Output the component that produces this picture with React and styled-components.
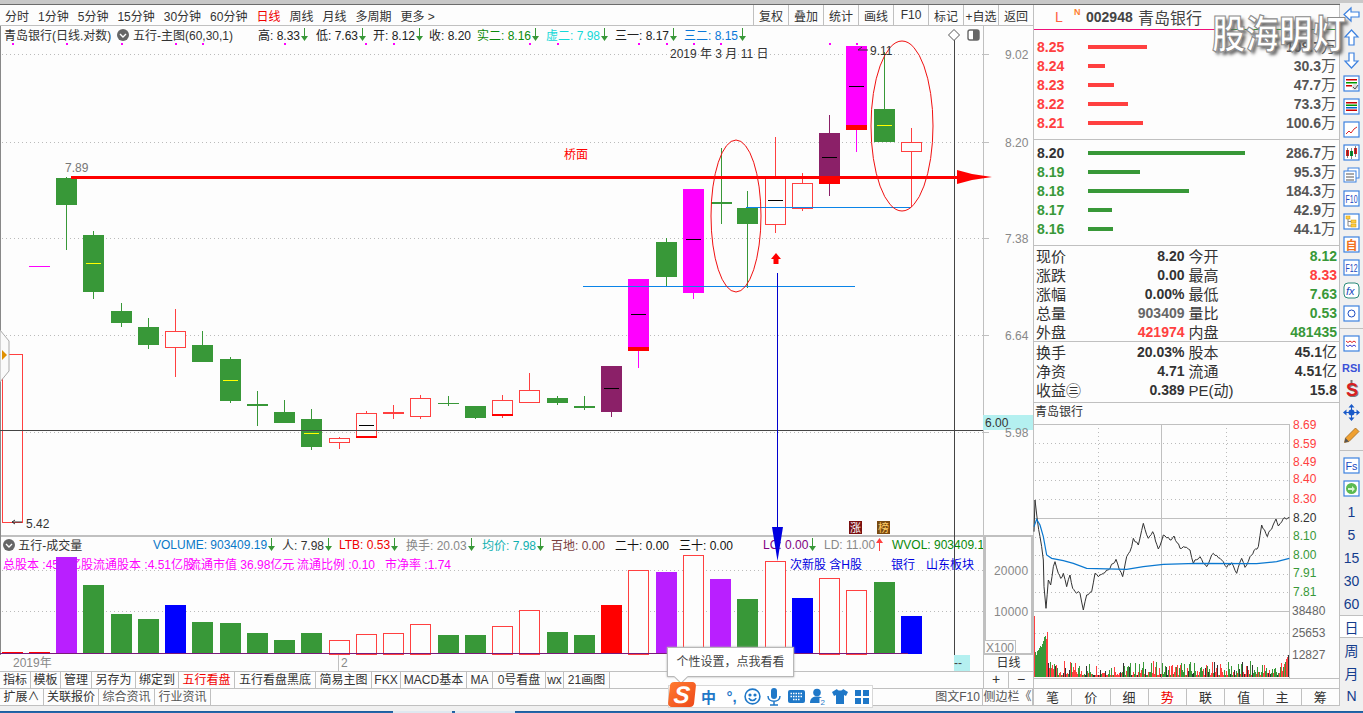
import React from "react";
import styled, { createGlobalStyle } from "styled-components";

const GREEN = "#389838";
const RED = "#ff4040";
const BG = "#fdfdfd";
const LINE = "#c0c0c0";
const FONT = `"Liberation Sans", "Noto Sans CJK SC", sans-serif`;

const Global = createGlobalStyle`
  html, body { margin: 0; padding: 0; background: #f0f0f0; }
  body { font-family: ${FONT}; font-size: 12px; color: #333; }
`;

const Page = styled.div`
  position: relative;
  width: 1363px;
  height: 713px;
  overflow: hidden;
  display: flex;
  flex-direction: column;
  background: #f0f0f0;
`;
const TopStrip = styled.div`
  height: 4px;
  flex: none;
  background: #c8c8c8;
  border-bottom: 1px solid #6c6c6c;
`;
const Body = styled.div`
  display: flex;
  height: 705px;
  flex: none;
  align-items: flex-start;
`;
const Main = styled.div`
  width: 1033px;
  display: flex;
  flex-direction: column;
  background: ${BG};
`;
const Toolbar = styled.div`
  height: 20px;
  flex: none;
  display: flex;
  justify-content: space-between;
  align-items: stretch;
  border-bottom: 1px solid ${LINE};
  background: ${BG};
`;
const Periods = styled.div`
  display: flex;
  gap: 9px;
  align-items: center;
  padding-left: 5px;
`;
const Period = styled.span`
  color: ${(p) => (p.$active ? "#f00000" : "#333")};
  white-space: nowrap;
`;
const Buttons = styled.div`
  display: flex;
`;
const ToolButton = styled.div`
  width: 35px;
  box-sizing: border-box;
  border-left: 1px solid ${LINE};
  display: flex;
  align-items: center;
  justify-content: center;
  color: #333;
  white-space: nowrap;
`;
const ChartPanel = styled.div`
  position: relative;
  z-index: 2;
  height: 509px;
  flex: none;
`;
const ChartSvg = styled.svg`
  position: absolute;
  inset: 0;
  overflow: visible;
  font-family: ${FONT};
`;
const ChartText = styled.text`
  font-size: 12px;
  letter-spacing: ${(p) => (p.$wide ? "0.2px" : "0")};
`;
const BadgeText = styled.text`
  font-size: 11px;
`;
const IconLabel = styled.text`
  font-family: ${FONT};
`;
const ArrowSvg = styled.svg`
  margin-left: 1px;
  flex: none;
`;
const Legend = styled.div`
  position: relative;
  display: flex;
  align-items: center;
  height: ${(p) => p.$h}px;
  padding-left: ${(p) => p.$pad ?? 4}px;
  width: 983px;
  box-sizing: border-box;
  overflow: hidden;
`;
const LegendItem = styled.span`
  width: ${(p) => p.$w}px;
  flex: none;
  display: inline-flex;
  align-items: center;
  white-space: nowrap;
  color: ${(p) => p.$c || "#333"};
`;
const VolumePanel = styled.div`
  position: relative;
  height: 120px;
  flex: none;
  box-sizing: border-box;
  border-top: 2px solid ${LINE};
`;
const InfoRow = styled.div`
  display: flex;
  height: 16px;
  margin-top: 3px;
  padding-left: 3px;
  align-items: center;
`;
const InfoItem = styled.span`
  width: ${(p) => p.$w}px;
  flex: none;
  white-space: nowrap;
  color: ${(p) => p.$c};
`;
const BarsSvg = styled.svg`
  position: absolute;
  left: 0;
  top: -2px;
  font-family: ${FONT};
`;
const DateRow = styled.div`
  display: flex;
  height: 17px;
  flex: none;
  border-bottom: 1px solid ${LINE};
  box-sizing: border-box;
`;
const DateCell = styled.div`
  width: ${(p) => p.$w}px;
  flex: none;
  box-sizing: border-box;
  padding-left: ${(p) => p.$pad || 0}px;
  color: ${(p) => p.$c || "#333"};
  background: ${(p) => p.$bg || "transparent"};
  border-left: ${(p) => (p.$edge ? `1px solid ${LINE}` : "none")};
  text-align: ${(p) => (p.$center ? "center" : "left")};
  line-height: 16px;
`;
const TabRow = styled.div`
  display: flex;
  height: 17px;
  flex: none;
  box-sizing: border-box;
  border-bottom: 1px solid ${LINE};
`;
const TabGroup = styled.div`
  display: flex;
  width: ${(p) => p.$w}px;
  flex: none;
`;
const Tab = styled.div`
  width: ${(p) => p.$w}px;
  flex: none;
  box-sizing: border-box;
  border-right: 1px solid ${LINE};
  text-align: center;
  line-height: 16px;
  white-space: nowrap;
  color: ${(p) => (p.$active ? "#f00000" : p.$dim ? "#555" : "#333")};
`;
const MiniButton = styled.div`
  width: 25px;
  flex: none;
  box-sizing: border-box;
  border-left: 1px solid ${LINE};
  text-align: center;
  font-size: 14px;
  color: #333;
  line-height: 15px;
`;
const Side = styled.div`
  width: 307px;
  flex: none;
  display: flex;
  flex-direction: column;
  box-sizing: border-box;
  border-left: 1px solid ${LINE};
  border-right: 1px solid ${LINE};
  background: ${BG};
`;
const SideHeader = styled.div`
  height: 25px;
  flex: none;
  box-sizing: border-box;
  display: flex;
  align-items: center;
  padding-left: 21px;
  border-bottom: 1px solid;
  border-image: linear-gradient(to right, #f0107a 64%, ${GREEN} 64%) 1;
`;
const Mark = styled.span`
  color: #ff6040;
  font-size: 14px;
  width: 19px;
`;
const MarkN = styled.span`
  color: #ff8030;
  font-size: 9px;
  font-weight: 700;
  width: 12px;
  align-self: flex-start;
  margin-top: 2px;
`;
const Code = styled.span`
  font-size: 14px;
  font-weight: 700;
  color: #444;
  width: 52px;
`;
const StockName = styled.span`
  font-size: 16px;
  color: #444;
`;
const BookBlock = styled.div`
  padding: ${(p) => p.$top}px 0 ${(p) => p.$bottom}px;
  flex: none;
  border-bottom: 1px solid ${LINE};
`;
const BookRow = styled.div`
  height: 19px;
  display: flex;
  align-items: center;
  padding: 0 3px 0 3px;
`;
const BookPrice = styled.span`
  width: 51px;
  flex: none;
  font-size: 14px;
  font-weight: 700;
  color: ${(p) => p.$c};
`;
const BookBar = styled.div`
  width: ${(p) => p.$w}px;
  height: 4px;
  background: ${(p) => p.$c};
`;
const BookVol = styled.span`
  margin-left: auto;
  font-size: 14px;
  font-weight: 700;
  color: #555;
  display: flex;
  align-items: center;
`;
const Unit = styled.span`
  font-size: 15px;
  font-weight: 400;
  line-height: 14px;
`;
const StatBlock = styled.div`
  height: ${(p) => p.$h || 96}px;
  flex: none;
  box-sizing: border-box;
  border-bottom: 1px solid ${LINE};
  overflow: hidden;
`;
const StatRow = styled.div`
  height: 19px;
  display: flex;
  gap: 4px;
  padding: 0 2px 0 2px;
`;
const StatCell = styled.div`
  flex: 1;
  display: flex;
  justify-content: space-between;
  align-items: center;
  white-space: nowrap;
`;
const StatLabel = styled.span`
  font-size: 15px;
  color: #333;
`;
const StatValue = styled.span`
  font-size: 14px;
  font-weight: 700;
  color: ${(p) => p.$c};
  display: flex;
  align-items: center;
`;
const MinuteTitle = styled.div`
  height: 21px;
  flex: none;
  line-height: 19px;
  padding-left: 1px;
`;
const MinuteSvg = styled.svg`
  flex: none;
  overflow: visible;
  font-family: ${FONT};
`;
const SideSpacer = styled.div`
  height: 7px;
  flex: none;
`;
const SideTabs = styled.div`
  display: flex;
  height: 18px;
  flex: none;
  box-sizing: border-box;
  border-top: 1px solid ${LINE};
  border-bottom: 1px solid ${LINE};
`;
const SideTab = styled.div`
  flex: 1;
  text-align: center;
  font-size: 13px;
  line-height: 17px;
  border-right: 1px solid ${LINE};
  color: ${(p) => (p.$active ? "#f00000" : "#333")};
  &:last-child { border-right: 0; }
`;
const Rail = styled.div`
  flex: 1;
  background: #f0f0f0;
  display: flex;
  flex-direction: column;
  margin-top: -2px;
`;
const RailItem = styled.div`
  height: 23px;
  flex: none;
  display: flex;
  align-items: center;
  justify-content: center;
  color: #143c8c;
  font-size: 14px;
  background: ${(p) => (p.$active ? "#fff" : "transparent")};
  border-top: ${(p) => (p.$active ? `1px solid ${LINE}` : "0")};
  border-bottom: ${(p) => (p.$active ? `1px solid ${LINE}` : "0")};
  box-sizing: border-box;
`;
const RailRule = styled.div`
  height: 1px;
  flex: none;
  margin: 3px 0;
  background: ${LINE};
`;
const Taskbar = styled.div`
  margin-top: 1px;
  height: 3px;
  flex: none;
  display: flex;
  background: linear-gradient(#1c5a9a, #2a74b8);
`;
const TaskTab = styled.div`
  width: ${(p) => p.$w}px;
  margin-left: ${(p) => p.$left}px;
  background: #dfe8f0;
`;
const Watermark = styled.div`
  position: absolute;
  left: 1212px;
  top: 13px;
  font-size: 33.500px;
  line-height: 44px;
  font-weight: 700;
  color: #fff;
  white-space: nowrap;
  -webkit-text-stroke: 1px #8c8c8c;
  text-shadow: 3px 3px 3px #666;
  transform: scaleY(1.14);
  z-index: 5;
`;
const Tooltip = styled.div`
  position: absolute;
  left: 667px;
  top: 647px;
  width: 127px;
  height: 30px;
  box-sizing: border-box;
  z-index: 6;
  background: #fff;
  border: 1px solid #b8b8b8;
  box-shadow: 0 0 2px #aaa;
  text-align: center;
  line-height: 28px;
  color: #444;
  &::after {
    content: "";
    position: absolute;
    left: 8px;
    bottom: -6px;
    width: 9px;
    height: 9px;
    background: #fff;
    border-right: 1px solid #b8b8b8;
    border-bottom: 1px solid #b8b8b8;
    transform: rotate(45deg);
  }
`;
const ImeBar = styled.div`
  position: absolute;
  left: 668px;
  top: 685px;
  width: 205px;
  height: 23px;
  box-sizing: border-box;
  z-index: 6;
  background: #fff;
  border: 1px solid #d8d8d8;
  display: flex;
  align-items: center;
`;
const ImeLogo = styled.div`
  position: relative;
  width: 26px;
  height: 25px;
  margin-top: -5px;
  flex: none;
  background: linear-gradient(135deg, #ff7a30, #ee4a1a);
  border-radius: 4px;
  transform: skewX(-6deg);
  display: flex;
  align-items: center;
  justify-content: center;
  span {
    color: #fff;
    font: italic 700 24px ${FONT};
    line-height: 25px;
  }
`;
const ImeGlyph = styled.span`
  width: ${(p) => p.$w}px;
  flex: none;
  text-align: center;
  color: #1f78c8;
  font-size: 15px;
  font-weight: 700;
`;
const ImeIcon = styled.span`
  width: 22px;
  flex: none;
  display: flex;
  justify-content: center;
`;

// chart data, in page pixels
const candles = [
  { x: 2, top: 354, bot: 522, kind: "hollow" },
  { x: 56, top: 178, bot: 205, wt: 177, wb: 250, kind: "green" },
  { x: 83, top: 235, bot: 292, wt: 231, wb: 299, kind: "green", dash: 263, dc: "#ffff00" },
  { x: 111, top: 311, bot: 323, wt: 303, wb: 327, kind: "green" },
  { x: 138, top: 327, bot: 345, wt: 318, wb: 349, kind: "green" },
  { x: 165, top: 331, bot: 347, wt: 309, wb: 377, kind: "hollow" },
  { x: 192, top: 345, bot: 362, wt: 331, wb: 362, kind: "green" },
  { x: 220, top: 359, bot: 401, wt: 357, wb: 403, kind: "green", dash: 380, dc: "#ffff00" },
  { x: 247, top: 404, bot: 406, wt: 391, wb: 426, kind: "green" },
  { x: 274, top: 412, bot: 423, wt: 400, wb: 423, kind: "green" },
  { x: 301, top: 419, bot: 447, wt: 409, wb: 450, kind: "green", dash: 433, dc: "#ffff00" },
  { x: 329, top: 438, bot: 442, wt: 437, wb: 449, kind: "hollow" },
  { x: 356, top: 413, bot: 437, wt: 411, wb: 438, kind: "hollow", dash: 425, dc: "#000", foot: 2 },
  { x: 383, top: 412, bot: 414, wt: 405, wb: 419, kind: "doji" },
  { x: 410, top: 398, bot: 416, wt: 395, wb: 419, kind: "hollow" },
  { x: 438, top: 403, bot: 404, wt: 396, wb: 406, kind: "green" },
  { x: 465, top: 406, bot: 418, wt: 406, wb: 419, kind: "green" },
  { x: 492, top: 400, bot: 415, wt: 395, wb: 418, kind: "hollow", foot: 2 },
  { x: 519, top: 390, bot: 402, wt: 373, wb: 402, kind: "hollow" },
  { x: 547, top: 398, bot: 403, wt: 396, wb: 405, kind: "green" },
  { x: 574, top: 406, bot: 408, wt: 396, wb: 410, kind: "green" },
  { x: 601, top: 366, bot: 412, wt: 366, wb: 417, kind: "purple", dash: 388, dc: "#000" },
  { x: 628, top: 279, bot: 350, wt: 279, wb: 368, kind: "magenta", dash: 314, dc: "#000", foot: 4 },
  { x: 656, top: 242, bot: 277, wt: 238, wb: 286, kind: "green" },
  { x: 683, top: 189, bot: 293, wt: 189, wb: 299, kind: "magenta", dash: 239, dc: "#000" },
  { x: 711, top: 202, bot: 204, wt: 148, wb: 224, kind: "green" },
  { x: 737, top: 208, bot: 224, wt: 191, wb: 288, kind: "green" },
  { x: 765, top: 177, bot: 224, wt: 137, wb: 233, kind: "hollow", dash: 200, dc: "#000" },
  { x: 792, top: 183, bot: 208, wt: 173, wb: 211, kind: "hollow" },
  { x: 819, top: 133, bot: 183, wt: 115, wb: 196, kind: "purple", dash: 157, dc: "#000", foot: 6 },
  { x: 846, top: 46, bot: 129, wt: 46, wb: 152, kind: "magenta", dash: 86, dc: "#000", foot: 5 },
  { x: 874, top: 109, bot: 142, wt: 52, wb: 142, kind: "green", dash: 125, dc: "#ffff00" },
  { x: 901, top: 142, bot: 151, wt: 128, wb: 207, kind: "hollow" },
];

const FILL = { green: GREEN, purple: "#8b2068", magenta: "#ff00ff", doji: RED };

const volumes = [
  [2, 652, "solid"], [29, 652, "solid"], [56, 557, "violet"], [83, 585, "green"], [111, 614, "green"],
  [138, 619, "green"], [165, 605, "blue"], [192, 622, "green"], [220, 623, "green"], [247, 633, "green"],
  [274, 640, "green"], [301, 633, "green"], [329, 640, "hollow"], [356, 634, "hollow"], [383, 633, "hollow"],
  [410, 624, "hollow"], [438, 635, "green"], [465, 635, "green"], [492, 626, "hollow"], [519, 610, "hollow"],
  [547, 632, "green"], [574, 635, "green"], [601, 605, "solid"], [628, 570, "hollow"], [656, 572, "violet"],
  [683, 555, "hollow"], [710, 579, "violet"], [737, 599, "green"], [765, 561, "hollow"], [792, 598, "blue"],
  [819, 578, "hollow"], [846, 590, "hollow"], [874, 582, "green"], [901, 616, "blue"],
];
const VOL_FILL = { solid: "#ff0000", violet: "#b91fff", green: GREEN, blue: "#0000ff" };

const markers = [12, 66, 121, 175, 202, 284, 365, 393, 529, 557, 638, 666, 693, 720, 829, 856];

const priceKeys = [
  [12,185],[15,90],[22,150],[30,200],[40,270],[42,350],[48,415],[55,330],[62,345],[70,290],[75,275],[85,310],
  [92,325],[100,310],[110,350],[120,315],[128,355],[135,365],[150,370],[160,420],[170,375],[185,365],[195,310],
  [205,320],[220,310],[240,295],[258,268],[278,320],[290,260],[305,230],[310,205],[325,225],[340,160],[355,205],
  [368,185],[385,237],[400,195],[420,210],[432,198],[450,235],[470,232],[480,240],[490,280],[510,260],[530,290],
  [550,250],[570,265],[590,292],[605,278],[620,310],[635,265],[645,292],[660,260],[685,230],[695,165],[712,200],
  [738,147],[745,168],[765,143],[778,143],
];
const avgKeys = [
  [12,170],[20,148],[30,165],[40,200],[50,255],[65,265],[100,272],[130,280],[170,295],[290,298],[340,290],
  [400,283],[500,280],[680,281],[740,275],[778,265],
];

const toPage = ([u, v]) => [1030 + u / 3, 470 + v / 3];

const pricePoints = () => {
  const out = [];
  priceKeys.map(toPage).forEach((p, i, all) => {
    if (i === 0) { out.push(p); return; }
    const q = all[i - 1];
    const steps = Math.max(1, Math.round((p[0] - q[0]) / 1.5));
    for (let s = 1; s <= steps; s++) {
      const t = s / steps;
      const k = out.length;
      const wob = s === steps ? 0 : Math.sin(k * 1.9) * 1.1 + Math.sin(k * 0.7) * 0.7;
      out.push([q[0] + (p[0] - q[0]) * t, q[1] + (p[1] - q[1]) * t + wob]);
    }
  });
  return out.map((p) => p.join(",")).join(" ");
};

const noise = (i) => {
  const v = Math.sin(i * 12.9898) * 43758.5453;
  return v - Math.floor(v);
};

const minuteBars = () => {
  const bars = [];
  for (let x = 1034; x < 1289; x++) {
    const i = x - 1034;
    const r = noise(i);
    const c = noise(i + 500);
    let h = 2 + r * r * 14;
    if (i === 0) h = 61;
    else if (i < 14) h = 18 + i * 1.6 + r * 6;
    else if (i < 24) h = 4 + r * 12;
    else if (i > 248) h = 8 + (i - 248) * 2.4;
    const color = i === 0 ? RED : i < 12 ? GREEN : i === 12 || i === 13 ? RED : c < 0.45 ? RED : c < 0.85 ? GREEN : "#333";
    bars.push(<rect key={x} x={x} y={677 - h} width="1" height={h} fill={color} />);
  }
  return bars;
};

const Candle = ({ c }) => {
  const mid = c.x + 10;
  const wickColor = c.kind === "hollow" ? RED : FILL[c.kind];
  return (
    <g>
      {c.wt !== undefined && <rect x={mid} y={c.wt} width="1" height={c.wb - c.wt} fill={wickColor} />}
      {c.kind === "hollow" ? (
        <rect x={c.x + 0.5} y={c.top + 0.5} width="20" height={c.bot - c.top} fill={BG} stroke={RED} />
      ) : (
        <rect x={c.x} y={c.top} width="21" height={c.bot - c.top} fill={FILL[c.kind]} />
      )}
      {c.foot && <rect x={c.x} y={c.bot - c.foot + 1} width="21" height={c.foot} fill="#ff0000" />}
      {c.dash && <rect x={c.x + 3} y={c.dash} width="15" height="1" fill={c.dc} />}
    </g>
  );
};

const Grid = ({ ys }) =>
  ys.map((y) => <line key={y} x1="2" x2="983" y1={y + 0.5} y2={y + 0.5} stroke="#bbb" strokeDasharray="1 3" />);

const DownArrow = ({ color = GREEN }) => (
  <ArrowSvg width="7" height="13" viewBox="0 0 7 13">
    <path d="M3 0h1v8h3l-3.5 5L0 8h3z" fill={color} />
  </ArrowSvg>
);
const UpArrow = ({ color = RED }) => (
  <ArrowSvg width="7" height="13" viewBox="0 0 7 13">
    <path d="M3 13h1V5h3L3.5 0 0 5h3z" fill={color} />
  </ArrowSvg>
);

const DropDot = () => (
  <svg width="12" height="12" viewBox="0 0 12 12">
    <circle cx="6" cy="6" r="6" fill="#666" />
    <path d="M3 5l3 3 3-3" fill="none" stroke="#fff" strokeWidth="1.4" />
  </svg>
);

const MainChart = () => (
  <ChartSvg width="1033" height="509" viewBox="0 26 1033 509">
    <g shapeRendering="crispEdges">
      <Grid ys={[54, 142, 238, 335, 432]} />
      <rect x="0" y="26" width="1" height="509" fill="#888" />
      <rect x="983" y="26" width="1" height="509" fill={LINE} />
      {[54, 142, 238, 335, 432].map((y) => <rect key={y} x="983" y={y} width="6" height="1" fill={LINE} />)}
      {markers.map((x) => <rect key={x} x={x} y="43" width="2" height="2" fill="#ff00ff" />)}
      <rect x="29" y="266" width="21" height="1" fill="#ff00ff" />
      {candles.map((c) => <Candle key={c.x} c={c} />)}
      <rect x="0" y="430" width="983" height="1" fill="#444" />
      <rect x="954" y="40" width="1" height="495" fill="#444" />
      <rect x="583" y="286" width="272" height="1" fill="#0a84e8" />
      <rect x="746" y="207" width="165" height="1" fill="#0a84e8" />
      <rect x="71" y="176" width="886" height="3" fill="#ff0000" />
      <rect x="777" y="273" width="1" height="262" fill="#0000d0" />
      <rect x="983" y="415" width="50" height="15" fill="#b4f0f0" />
    </g>
    <polygon points="0,330 9,341 9,371 0,382" fill="#fafafa" stroke="#aaa" />
    <polygon points="2,350 7,355 2,360" fill="#e09000" />
    <polygon points="957,170 972,174 992,177 972,180 957,184" fill="#ff0000" />
    <polygon points="776,253 781,259 778.5,259 778.5,264 773.5,264 773.5,259 771,259" fill="#ff0000" />
    <polygon points="772,527 783,527 777.5,561" fill="#0000e0" />
    <ellipse cx="736" cy="216" rx="25" ry="76" fill="none" stroke="#f01010" />
    <ellipse cx="902" cy="126" rx="31" ry="85" fill="none" stroke="#f01010" />
    <path d="M954 29.5l5.5 5.5-5.5 5.5-5.5-5.5z" fill="#fff" stroke="#555" />
    <rect x="968" y="30" width="11" height="10" rx="2" fill="#fff" stroke="#666" strokeWidth="1.4" />
    <rect x="973" y="30" width="6" height="10" fill="#666" />
    <rect x="849" y="521" width="13" height="13" fill="#7a1010" />
    <rect x="877" y="521" width="13" height="13" fill="#7a4a10" />
    <path d="M22 522h-10m3-2l-3 2 3 2" fill="none" stroke="#333" />
    <path d="M868 50h-10m4-3l-4 3" fill="none" stroke="#333" />
    <ChartText x="65" y="172" fill="#777">7.89</ChartText>
    <ChartText x="26" y="528" fill="#333">5.42</ChartText>
    <ChartText x="870" y="55" fill="#333">9.11</ChartText>
    <ChartText x="670" y="58" fill="#333">2019 年 3 月 11 日</ChartText>
    <ChartText x="564" y="159" fill="#ff0000">桥面</ChartText>
    <ChartText x="1005" y="59" fill="#888">9.02</ChartText>
    <ChartText x="1005" y="147" fill="#888">8.20</ChartText>
    <ChartText x="1005" y="243" fill="#888">7.38</ChartText>
    <ChartText x="1005" y="340" fill="#888">6.64</ChartText>
    <ChartText x="1005" y="437" fill="#888">5.98</ChartText>
    <ChartText x="985" y="427" fill="#333">6.00</ChartText>
    <BadgeText x="850" y="532" fill="#fff">涨</BadgeText>
    <BadgeText x="878" y="532" fill="#fc6">榜</BadgeText>
  </ChartSvg>
);

const VolumeBars = () => (
  <BarsSvg width="1033" height="120" viewBox="0 535 1033 120">
    <g shapeRendering="crispEdges">
      <Grid ys={[570, 611]} />
      <rect x="0" y="535" width="1" height="120" fill="#888" />
      {volumes.map(([x, top, kind]) =>
        kind === "hollow" ? (
          <rect key={x} x={x + 0.5} y={top + 0.5} width="20" height={654 - top} fill={BG} stroke={RED} />
        ) : (
          <rect key={x} x={x} y={top} width="21" height={654 - top} fill={VOL_FILL[kind]} />
        )
      )}
      <rect x="0" y="653" width="908" height="1" fill="#7a1a7a" />
      <rect x="954" y="535" width="1" height="120" fill="#444" />
      <rect x="983" y="535" width="3" height="120" fill={LINE} />
      <rect x="1031" y="535" width="2" height="120" fill={LINE} />
      <rect x="983" y="535" width="50" height="2" fill={LINE} />
      <rect x="983" y="653" width="50" height="2" fill={LINE} />
    </g>
    <rect x="984.5" y="640.5" width="31" height="13" fill={BG} stroke={LINE} />
    <ChartText x="994" y="575" fill="#888" $wide>20000</ChartText>
    <ChartText x="994" y="616" fill="#888" $wide>10000</ChartText>
    <ChartText x="986" y="652" fill="#888">X100</ChartText>
  </BarsSvg>
);

const MinuteChart = () => {
  const red = [[8.69, 425], [8.59, 444], [8.49, 462], [8.4, 479], [8.3, 499]];
  const green = [[8.1, 536], [8.0, 555], [7.91, 573], [7.81, 592]];
  const solid = [424, 518, 611, 678];
  const dotted = [443, 462, 480, 499, 537, 555, 574, 592, 633, 655];
  return (
    <MinuteSvg width="305" height="257" viewBox="1034 424 305 257">
      <g shapeRendering="crispEdges">
        {dotted.map((y) => <line key={y} x1="1035" x2="1289" y1={y + 0.5} y2={y + 0.5} stroke="#bbb" strokeDasharray="1 3" />)}
        <line x1="1098.5" x2="1098.5" y1="424" y2="678" stroke="#bbb" strokeDasharray="1 3" />
        <line x1="1226.5" x2="1226.5" y1="424" y2="678" stroke="#bbb" strokeDasharray="1 3" />
        <rect x="1161" y="424" width="1" height="254" fill={LINE} />
        <rect x="1289" y="424" width="1" height="254" fill={LINE} />
        {solid.map((y) => <rect key={y} x="1034" y={y} width={y === 678 ? 306 : 256} height="1" fill={LINE} />)}
        {minuteBars()}
      </g>
      <polyline points={pricePoints()} fill="none" stroke="#333" />
      <polyline points={avgKeys.map(toPage).map((p) => p.join(",")).join(" ")} fill="none" stroke="#0a78d0" strokeWidth="1.2" />
      {red.map(([v, y]) => <ChartText key={y} x="1293" y={y + 4} fill={RED}>{v.toFixed(2)}</ChartText>)}
      <ChartText x="1293" y="522" fill="#333">8.20</ChartText>
      {green.map(([v, y]) => <ChartText key={y} x="1293" y={y + 4} fill={GREEN}>{v.toFixed(2)}</ChartText>)}
      <ChartText x="1292" y="615" fill="#666">38480</ChartText>
      <ChartText x="1292" y="637" fill="#666">25653</ChartText>
      <ChartText x="1292" y="659" fill="#666">12827</ChartText>
    </MinuteSvg>
  );
};

// right hand icon rail
const Blue = "#3d82e0";
const Boxed = ({ children }) => (
  <svg width="17" height="17" viewBox="0 0 17 17">
    <rect x="1" y="1" width="15" height="15" fill="#fff" stroke={Blue} strokeWidth="1.2" />
    {children}
  </svg>
);
const Dir = ({ d }) => (
  <svg width="17" height="17" viewBox="0 0 17 17">
    <path d={d} fill="#fff" stroke={Blue} strokeWidth="1.2" />
  </svg>
);
const Lines = ({ rows }) =>
  rows.map(([c, y, w], i) => <rect key={i} x="3" y={y} width={w} height="1.5" fill={c} />);
const BoxLabel = ({ children }) => (
  <IconLabel x="2.5" y="12.5" fill="#1a4ac0" fontSize="10" textLength="12" lengthAdjust="spacingAndGlyphs">
    {children}
  </IconLabel>
);

const railTop = [
  <Dir d="M1 8.5L8 2v4h8v5H8v4z" />,
  <Dir d="M8.5 1L15 8h-4v8H6V8H2z" />,
  <Dir d="M8.5 16L15 9h-4V1H6v8H2z" />,
  <Boxed><Lines rows={[["#c00", 4, 11], ["#090", 7, 11], ["#c00", 10, 6]]} /><circle cx="12" cy="12" r="3" fill="#ddd" /><path d="M10 12l2 2 3-4" fill="none" stroke="#555" /></Boxed>,
  <Boxed><Lines rows={[["#c00", 4, 11], ["#090", 6.5, 11], ["#06c", 9, 11], ["#c00", 11.5, 11]]} /></Boxed>,
  <Boxed><path d="M3 13l3-3 2 2 3-4 3-2" fill="none" stroke="#d22" /></Boxed>,
  <Boxed><rect x="3" y="6" width="3" height="6" fill="#d22" /><rect x="7" y="7" width="3" height="5" fill="#093" /><rect x="11" y="4" width="3" height="6" fill="#d22" /><path d="M4.5 4v10M8.5 4v11M12.5 2v11" stroke="#333" strokeWidth=".6" /></Boxed>,
  <svg width="17" height="17" viewBox="0 0 17 17"><rect x="5" y="1" width="11" height="10" fill="#fff" stroke={Blue} /><rect x="1" y="4" width="12" height="11" fill="#fff" stroke={Blue} /><path d="M3 7h8M3 10h8M3 13h8" stroke="#555" /></svg>,
  <Boxed><BoxLabel>F10</BoxLabel></Boxed>,
  <Boxed><rect x="3" y="3" width="4" height="3" fill="#fc4" stroke="#c90" strokeWidth=".5" /><rect x="8" y="7" width="5" height="3" fill="#fc4" stroke="#c90" strokeWidth=".5" /><rect x="8" y="11" width="5" height="3" fill="#fc4" stroke="#c90" strokeWidth=".5" /><path d="M5 6v7h3M5 8.5h3" fill="none" stroke="#888" /></Boxed>,
  <Boxed><IconLabel x="2.5" y="13.5" fill="#f07020" fontSize="12" fontWeight="700">自</IconLabel></Boxed>,
  <Boxed><BoxLabel>F12</BoxLabel></Boxed>,
  <svg width="17" height="17" viewBox="0 0 17 17"><rect x="1" y="1" width="15" height="15" rx="4" fill="#fff" stroke="#2a8a7a" /><IconLabel x="3" y="13" fill="#1a4ac0" fontSize="11" fontStyle="italic">fx</IconLabel></svg>,
  <Boxed><circle cx="8.5" cy="8.5" r="3.5" fill="none" stroke="#1a4ac0" /></Boxed>,
];
const railMiddle = [
  <Boxed><path d="M3 6l2 1.5 2-1.5 2 1.5 2-1.5 2 1.5" fill="none" stroke="#d22" /><path d="M3 10l2 1.5 2-1.5 2 1.5 2-1.5 2 1.5" fill="none" stroke="#33c" /></Boxed>,
  <svg width="20" height="14" viewBox="0 0 20 14"><IconLabel x="0" y="12" fill="#3a50d8" fontSize="11" fontWeight="700">RSI</IconLabel></svg>,
  <svg width="17" height="20" viewBox="0 0 17 20"><path d="M8.5 0v4" stroke="#777" strokeWidth="2" /><IconLabel x="4" y="17" fill="#777" fontSize="18" fontWeight="700">S</IconLabel><IconLabel x="3" y="16" fill="#d82020" fontSize="18" fontWeight="700">S</IconLabel></svg>,
  <svg width="17" height="17" viewBox="0 0 17 17" fill="#1a5ac8">
    <path d="M8.5 0l3 3.500h-6zM8.500 17l-3-3.500h6zM0 8.500l3.500-3v6zM17 8.500l-3.500 3v-6z" />
    <circle cx="8.500" cy="8.500" r="3" />
    <path d="M3 8h11v1H3zM8 3h1v11H8z" />
  </svg>,
  <svg width="17" height="17" viewBox="0 0 17 17"><path d="M12.5 1l3.500 3.500L6 14.500l-4.500 1 1-4.500z" fill="#f0a030" stroke="#a06a20" strokeWidth=".8" /><path d="M1.500 15.500l1-4.500 3.500 3.500z" fill="#555" /></svg>,
];
const railBottom = [
  <Boxed><BoxLabel>Fs</BoxLabel></Boxed>,
  <Boxed><circle cx="8.5" cy="8.5" r="5.5" fill="#5cba50" /><path d="M5 8h4V6l3 3-3 3v-2H5z" fill="#d8f5d0" /></Boxed>,
];
const periods = ["分时", "1分钟", "5分钟", "15分钟", "30分钟", "60分钟", "日线", "周线", "月线", "多周期"];
const rightButtons = ["复权", "叠加", "统计", "画线", "F10", "标记", "+自选", "返回"];
const tabs = [
  ["指标", 31], ["模板", 30], ["管理", 31], ["另存为", 44], ["绑定到", 43], ["五行看盘", 56, true],
  ["五行看盘黑底", 81], ["简易主图", 56], ["FKX", 29], ["MACD基本", 66], ["MA", 26], ["0号看盘", 53], ["wx", 18], ["21画图", 46],
];
const subTabs = [["扩展∧", 44], ["关联报价", 55], ["综合资讯", 56, false, true], ["行业资讯", 56, false, true]];
const asks = [["8.25", 59, "108.7"], ["8.24", 17, "30.3"], ["8.23", 26, "47.7"], ["8.22", 40, "73.3"], ["8.21", 55, "100.6"]];
const bids = [["8.20", 157, "286.7", "#333"], ["8.19", 52, "95.3"], ["8.18", 101, "184.3"], ["8.17", 24, "42.9"], ["8.16", 25, "44.1"]];
const quote = [
  ["现价", "8.20", "#333", "今开", "8.12", GREEN],
  ["涨跌", "0.00", "#333", "最高", "8.33", RED],
  ["涨幅", "0.00%", "#333", "最低", "7.63", GREEN],
  ["总量", "903409", "#666", "量比", "0.53", GREEN],
  ["外盘", "421974", RED, "内盘", "481435", GREEN],
];
const finance = [
  ["换手", "20.03%", "#333", "股本", "45.1", "#333", "亿"],
  ["净资", "4.71", "#333", "流通", "4.51", "#333", "亿"],
  ["收益㊂", "0.389", "#333", "PE(动)", "15.8", "#333"],
];
const sideTabs = ["笔", "价", "细", "势", "联", "值", "主", "筹"];

export default function App() {
  return (
    <Page>
      <Global />
      <TopStrip />
      <Body>
        <Main>
          <Toolbar>
            <Periods>
              {periods.map((p) => <Period key={p} $active={p === "日线"}>{p}</Period>)}
              <Period>更多 &gt;</Period>
            </Periods>
            <Buttons>
              {rightButtons.map((b) => <ToolButton key={b}>{b}</ToolButton>)}
            </Buttons>
          </Toolbar>

          <ChartPanel>
            <MainChart />
            <Legend $h={17}>
              <LegendItem $w={113}>青岛银行(日线.对数)</LegendItem>
              <LegendItem $w={16}><DropDot /></LegendItem>
              <LegendItem $w={125}>五行-主图(60,30,1)</LegendItem>
              <LegendItem $w={58} $c="#222">高: 8.33<DownArrow /></LegendItem>
              <LegendItem $w={57} $c="#222">低: 7.63<DownArrow /></LegendItem>
              <LegendItem $w={56} $c="#222">开: 8.12<DownArrow /></LegendItem>
              <LegendItem $w={48} $c="#222">收: 8.20</LegendItem>
              <LegendItem $w={69} $c="#0a8a0a">实二: 8.16<DownArrow /></LegendItem>
              <LegendItem $w={69} $c="#14d8d8">虚二: 7.98<DownArrow /></LegendItem>
              <LegendItem $w={69} $c="#222">三一: 8.17<DownArrow /></LegendItem>
              <LegendItem $w={69} $c="#0a78d8">三二: 8.15<DownArrow /></LegendItem>
            </Legend>
          </ChartPanel>

          <VolumePanel>
            <Legend $h={15} $pad={3}>
              <LegendItem $w={150}><DropDot />&nbsp;五行-成交量</LegendItem>
              <LegendItem $w={129} $c="#0a78c8">VOLUME: 903409.19<DownArrow /></LegendItem>
              <LegendItem $w={57}>人: 7.98<DownArrow /></LegendItem>
              <LegendItem $w={67} $c="#f00000">LTB: 0.53<DownArrow /></LegendItem>
              <LegendItem $w={76} $c="#888">换手: 20.03<DownArrow /></LegendItem>
              <LegendItem $w={69} $c="#10b0b0">均价: 7.98<DownArrow /></LegendItem>
              <LegendItem $w={64} $c="#7a4040">百地: 0.00</LegendItem>
              <LegendItem $w={64} $c="#111">二十: 0.00</LegendItem>
              <LegendItem $w={84} $c="#111">三十: 0.00</LegendItem>
              <LegendItem $w={61} $c="#800080">LC: 0.00<DownArrow /></LegendItem>
              <LegendItem $w={68} $c="#888">LD: 11.00<UpArrow /></LegendItem>
              <LegendItem $w={92} $c="#0a8a0a">WVOL: 903409.15</LegendItem>
            </Legend>
            <InfoRow>
              <InfoItem $w={90} $c="#ff00ff">总股本 :45.1亿股</InfoItem>
              <InfoItem $w={96} $c="#ff00ff">流通股本 :4.51亿股</InfoItem>
              <InfoItem $w={108} $c="#ff00ff">流通市值 36.98亿元</InfoItem>
              <InfoItem $w={88} $c="#ff00ff">流通比例 :0.10</InfoItem>
              <InfoItem $w={405} $c="#ff00ff">市净率 :1.74</InfoItem>
              <InfoItem $w={101} $c="#0000e0">次新股 含H股</InfoItem>
              <InfoItem $w={35} $c="#0000e0">银行</InfoItem>
              <InfoItem $w={50} $c="#0000e0">山东板块</InfoItem>
            </InfoRow>
            <VolumeBars />
          </VolumePanel>

          <DateRow>
            <DateCell $w={338} $pad={13} $c="#888">2019年</DateCell>
            <DateCell $w={616} $pad={2} $c="#888" $edge>2</DateCell>
            <DateCell $w={16} $bg="#b4f0f0" $c="#444">--</DateCell>
            <DateCell $w={13} />
            <DateCell $w={50} $edge $center>日线</DateCell>
          </DateRow>

          <TabRow>
            <TabGroup $w={983}>
              {tabs.map(([t, w, on]) => <Tab key={t} $w={w} $active={on}>{t}</Tab>)}
            </TabGroup>
            <MiniButton>+</MiniButton>
            <MiniButton>−</MiniButton>
          </TabRow>

          <TabRow>
            <TabGroup $w={933}>
              {subTabs.map(([t, w, on, dim]) => <Tab key={t} $w={w} $active={on} $dim={dim}>{t}</Tab>)}
            </TabGroup>
            <Tab $w={50} $dim>图文F10</Tab>
            <Tab $w={50} $dim>侧边栏《</Tab>
          </TabRow>
        </Main>

        <Side>
          <SideHeader>
            <Mark>L</Mark>
            <MarkN>N</MarkN>
            <Code>002948</Code>
            <StockName>青岛银行</StockName>
          </SideHeader>

          <BookBlock $top={7} $bottom={7}>
            {asks.map(([p, w, v]) => (
              <BookRow key={p}>
                <BookPrice $c={RED}>{p}</BookPrice>
                <BookBar $w={w} $c={RED} />
                <BookVol>{v}<Unit>万</Unit></BookVol>
              </BookRow>
            ))}
          </BookBlock>
          <BookBlock $top={3} $bottom={7}>
            {bids.map(([p, w, v, c]) => (
              <BookRow key={p}>
                <BookPrice $c={c || GREEN}>{p}</BookPrice>
                <BookBar $w={w} $c={GREEN} />
                <BookVol>{v}<Unit>万</Unit></BookVol>
              </BookRow>
            ))}
          </BookBlock>

          <StatBlock>
            {quote.map((r) => (
              <StatRow key={r[0]}>
                <StatCell><StatLabel>{r[0]}</StatLabel><StatValue $c={r[2]}>{r[1]}</StatValue></StatCell>
                <StatCell><StatLabel>{r[3]}</StatLabel><StatValue $c={r[5]}>{r[4]}</StatValue></StatCell>
              </StatRow>
            ))}
          </StatBlock>
          <StatBlock $h={61}>
            {finance.map((r) => (
              <StatRow key={r[0]}>
                <StatCell><StatLabel>{r[0]}</StatLabel><StatValue $c={r[2]}>{r[1]}</StatValue></StatCell>
                <StatCell>
                  <StatLabel>{r[3]}</StatLabel>
                  <StatValue $c={r[5]}>{r[4]}{r[6] && <Unit>{r[6]}</Unit>}</StatValue>
                </StatCell>
              </StatRow>
            ))}
          </StatBlock>

          <MinuteTitle>青岛银行</MinuteTitle>
          <MinuteChart />
          <SideSpacer />
          <SideTabs>
            {sideTabs.map((t) => <SideTab key={t} $active={t === "势"}>{t}</SideTab>)}
          </SideTabs>
        </Side>

        <Rail>
          {railTop.map((icon, i) => <RailItem key={i}>{icon}</RailItem>)}
          <RailRule />
          {railMiddle.map((icon, i) => <RailItem key={i}>{icon}</RailItem>)}
          <RailRule />
          {railBottom.map((icon, i) => <RailItem key={i}>{icon}</RailItem>)}
          {["1", "5", "15", "30", "60"].map((t) => <RailItem key={t}>{t}</RailItem>)}
          <RailItem $active>日</RailItem>
          <RailItem>周</RailItem>
          <RailItem>月</RailItem>
          <RailItem>N</RailItem>
        </Rail>
      </Body>

      <Taskbar>
        <TaskTab $w={59} $left={393} />
        <TaskTab $w={60} $left={3} />
      </Taskbar>

      <Watermark>股海明灯</Watermark>

      <Tooltip>个性设置，点我看看</Tooltip>
      <ImeBar>
        <ImeLogo><span>S</span></ImeLogo>
        <ImeGlyph $w={27}>中</ImeGlyph>
        <ImeGlyph $w={19}>°,</ImeGlyph>
        <ImeIcon>
          <svg width="17" height="17" viewBox="0 0 17 17" fill="none" stroke="#1f78c8" strokeWidth="1.6">
            <circle cx="8.5" cy="8.5" r="7.4" />
            <circle cx="6" cy="7" r=".8" fill="#1f78c8" />
            <circle cx="11" cy="7" r=".8" fill="#1f78c8" />
            <path d="M4.8 10.2c1.6 3 5.8 3 7.4 0" />
          </svg>
        </ImeIcon>
        <ImeIcon>
          <svg width="14" height="18" viewBox="0 0 14 18">
            <rect x="4" y="0" width="6" height="11" rx="3" fill="#1f78c8" />
            <path d="M1 8c0 7 12 7 12 0M7 13v4M3 17h8" fill="none" stroke="#1f78c8" strokeWidth="1.5" />
          </svg>
        </ImeIcon>
        <ImeIcon>
          <svg width="17" height="13" viewBox="0 0 17 13">
            <rect width="17" height="13" rx="2" fill="#1f78c8" />
            <path d="M2.5 3.5h12M2.5 6.5h12M5 9.5h7" stroke="#fff" strokeWidth="1.3" strokeDasharray="1.5 1" />
          </svg>
        </ImeIcon>
        <ImeIcon>
          <svg width="17" height="17" viewBox="0 0 17 17">
            <circle cx="7" cy="4.5" r="3.8" fill="#1f78c8" />
            <path d="M0 15c0-5 3-6.5 7-6.5s7 1.500 7 6.500z" fill="#1f78c8" />
            <rect x="9.5" y="10" width="7" height="7" fill="#fff" />
            <text x="10.5" y="16.5" fontSize="8" fill="#1f78c8">2</text>
          </svg>
        </ImeIcon>
        <ImeIcon>
          <svg width="16" height="15" viewBox="0 0 16 15">
            <path d="M5 0L0 3l2 4 2-1v9h8V6l2 1 2-4-5-3c-.5 2-5.500 2-6 0z" fill="#1f78c8" />
          </svg>
        </ImeIcon>
        <ImeIcon>
          <svg width="14" height="14" viewBox="0 0 14 14" fill="#1f78c8">
            <rect width="6" height="6" /><rect x="8" width="6" height="6" />
            <rect y="8" width="6" height="6" /><rect x="8" y="8" width="6" height="6" />
          </svg>
        </ImeIcon>
      </ImeBar>
    </Page>
  );
}
